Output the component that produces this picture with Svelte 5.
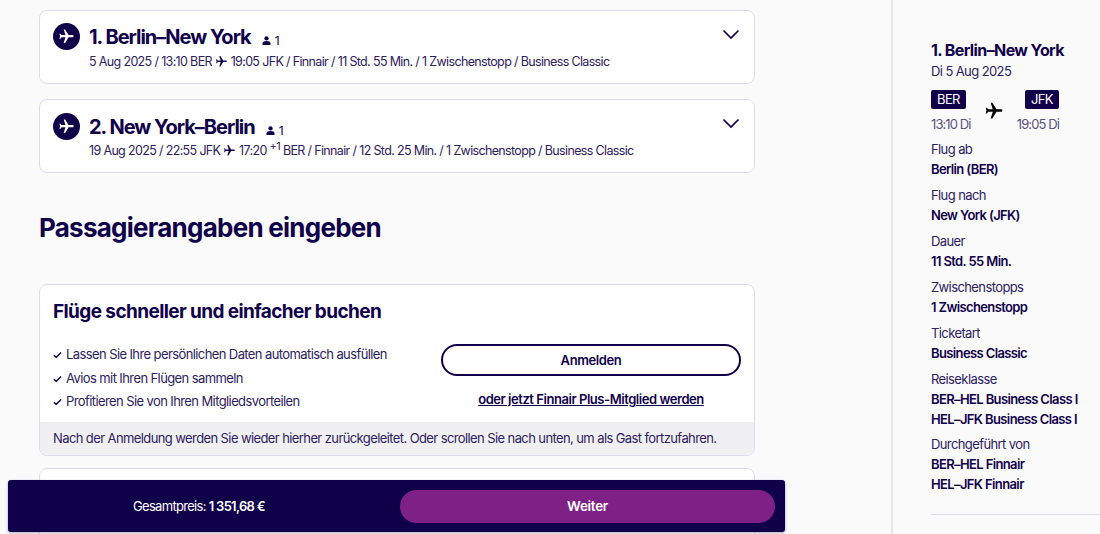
<script>
  const flights = [
    { title: '1. Berlin–New York', parts: ['5 Aug 2025 / 13:10 BER', '19:05 JFK / Finnair / 11 Std. 55 Min. / 1 Zwischenstopp / Business Classic'], plus: false },
    { title: '2. New York–Berlin', parts: ['19 Aug 2025 / 22:55 JFK', '17:20', 'BER / Finnair / 12 Std. 25 Min. / 1 Zwischenstopp / Business Classic'], plus: true }
  ];
  const benefits = ['Lassen Sie Ihre persönlichen Daten automatisch ausfüllen', 'Avios mit Ihren Flügen sammeln', 'Profitieren Sie von Ihren Mitgliedsvorteilen'];
  const details = [
    ['Flug ab', ['Berlin (BER)']],
    ['Flug nach', ['New York (JFK)']],
    ['Dauer', ['11 Std. 55 Min.']],
    ['Zwischenstopps', ['1 Zwischenstopp']],
    ['Ticketart', ['Business Classic']],
    ['Reiseklasse', ['BER–HEL Business Class I', 'HEL–JFK Business Class I']],
    ['Durchgeführt von', ['BER–HEL Finnair', 'HEL–JFK Finnair']]
  ];
  const plane = 'M21 16v-2l-8-5V3.5C13 2.67 12.33 2 11.500 2S10 2.67 10 3.500V9l-8 5v2l8-2.500V19l-2 1.500V22l3.500-1 3.500 1v-1.500L13 19v-5.500z';
</script>

<div class="page">
  <main class="main">
    {#each flights as f}
      <section class="card flight">
        <span class="badge">
          <svg viewBox="0 0 24 24" width="17" height="17"><path transform="rotate(90 12 12)" d={plane} fill="#fff" /></svg>
        </span>
        <div class="flight-text">
          <div class="flight-head">
            <h2>{f.title}</h2>
            <span class="pax">
              <svg viewBox="0 0 10 10" width="9" height="9"><circle cx="5" cy="2.700" r="2.400" /><path d="M.6 10V8c0-1.500 1.600-2.400 4.400-2.400S9.400 6.500 9.400 8v2z" /></svg>
              1
            </span>
          </div>
          <p class="meta">
            {f.parts[0]}
            <svg class="mini" viewBox="0 0 24 24" width="13" height="13"><path transform="rotate(90 12 12)" d={plane} /></svg>
            {f.parts[1]}
            {#if f.plus}<sup>+1</sup> {f.parts[2]}{/if}
          </p>
        </div>
        <svg class="chev" viewBox="0 0 18 11" width="18" height="11"><path d="M1.500 1.500 9 9l7.500-7.500" /></svg>
      </section>
    {/each}

    <h1>Passagierangaben eingeben</h1>

    <section class="card login">
      <h3>Flüge schneller und einfacher buchen</h3>
      <div class="login-body">
        <ul>
          {#each benefits as b}
            <li>
              <svg viewBox="0 0 10 8" width="9" height="8"><path d="M1 4.200 3.600 6.600 9 1.200" /></svg>
              {b}
            </li>
          {/each}
        </ul>
        <div class="actions">
          <button class="outline">Anmelden</button>
          <a href="#join">oder jetzt Finnair Plus-Mitglied werden</a>
        </div>
      </div>
      <div class="note">Nach der Anmeldung werden Sie wieder hierher zurückgeleitet. Oder scrollen Sie nach unten, um als Gast fortzufahren.</div>
    </section>

    <section class="card next"></section>
  </main>

  <aside class="side">
    <h4>1. Berlin–New York</h4>
    <div class="date">Di 5 Aug 2025</div>
    <div class="route">
      <div class="stop"><span class="code">BER</span><span class="time">13:10 Di</span></div>
      <svg viewBox="0 0 24 24" width="20" height="20"><path transform="rotate(90 12 12)" d={plane} /></svg>
      <div class="stop right"><span class="code">JFK</span><span class="time">19:05 Di</span></div>
    </div>
    <dl>
      {#each details as d}
        <dt>{d[0]}</dt>
        {#each d[1] as v}<dd>{v}</dd>{/each}
      {/each}
    </dl>
    <hr />
  </aside>

  <div class="bar">
    <div class="price">Gesamtpreis: <b>1 351,68 €</b></div>
    <button class="cta">Weiter</button>
  </div>
</div>

<style>
  :global(body) { margin: 0; background: #fafafb; }
  .page {
    height: 534px; overflow: hidden; position: relative; display: flex;
    font-family: Inter, "Open Sans", sans-serif; color: #10004a; font-size: 13px; letter-spacing: -0.6px;
  }
  .main { width: 716px; margin-left: 39px; padding-top: 10px; flex: none; }
  .card { background: #fff; border: 1px solid #dcdcec; border-radius: 8px; box-sizing: border-box; }
  .flight { height: 74px; margin-bottom: 15px; display: flex; padding: 12px 13px; position: relative; }
  .flight + .flight { padding-top: 13px; }
  .flight + .flight .meta { margin-top: 1px; }
  .badge { width: 27px; height: 27px; border-radius: 50%; background: #10004a; display: flex; align-items: center; justify-content: center; flex: none; }
  .flight-text { margin-left: 9px; }
  .flight-head { display: flex; align-items: center; height: 28px; }
  h2 { font-size: 20px; font-weight: 700; margin: 0; line-height: 28px; letter-spacing: -1px; }
  .pax { margin-left: 11px; margin-top: 6px; font-size: 12px; display: flex; align-items: center; gap: 4px; }
  .pax svg { fill: #10004a; }
  .meta { margin: 2px 0 0; line-height: 18px; color: #2d2160; white-space: nowrap; font-size: 12.5px; letter-spacing: -0.65px; }
  .mini { fill: #10004a; vertical-align: -2px; }
  sup { font-size: 11px; line-height: 0; }
  .chev { position: absolute; top: 18px; right: 14px; fill: none; stroke: #10004a; stroke-width: 1.7; }
  h1 { font-size: 26px; font-weight: 700; margin: 39px 0 40px; line-height: 32px; letter-spacing: -0.75px; }
  .login { height: 172px; padding-top: 15px; display: flex; flex-direction: column; }
  h3 { font-size: 19px; font-weight: 700; margin: 0 13px; line-height: 24px; letter-spacing: -0.6px; }
  .login-body { display: flex; justify-content: space-between; padding: 20px 13px 0; flex: 1; }
  ul { list-style: none; margin: -1px 0 0; padding: 0; }
  li { line-height: 23.500px; color: #2d2160; white-space: nowrap; }
  li svg { fill: none; stroke: #10004a; stroke-width: 1.6; margin-right: 1px; }
  .actions { width: 300px; display: flex; flex-direction: column; align-items: center; }
  .outline { width: 100%; height: 32px; border: 2px solid #10004a; border-radius: 16px; background: #fff; color: #10004a; font: 600 13px Inter, sans-serif; letter-spacing: -0.4px; }
  a { margin-top: 14px; color: #10004a; font-weight: 600; line-height: 18px; letter-spacing: -0.45px; }
  .note { height: 33px; line-height: 33px; background: #f0f0f2; border-radius: 0 0 8px 8px; padding: 0 13px; color: #2d2160; white-space: nowrap; }
  .next { height: 80px; margin-top: 12px; }
  .side { margin-left: 136px; flex: 1; border-left: 2px solid #e6e6ee; padding: 39px 0 0 38px; }
  h4 { font-size: 16px; font-weight: 700; margin: 0; line-height: 22px; white-space: nowrap; letter-spacing: -0.6px; }
  .date { line-height: 20px; margin-top: 0; color: #2d2160; }
  .route { display: flex; align-items: center; width: 128px; justify-content: space-between; margin-top: 9px; }
  .stop { display: flex; flex-direction: column; align-items: flex-start; gap: 7px; }
  .stop.right { align-items: flex-end; }
  .code { background: #10004a; color: #fff; border-radius: 2px; padding: 0 6px; line-height: 19px; }
  .time { color: #5a5080; line-height: 16px; letter-spacing: -0.9px; }
  dl { margin: 7px 0 0; }
  dt { line-height: 20px; margin-top: 6px; color: #2d2160; }
  dd + dd + dt { margin-top: 5px; }
  dd { margin: 0; line-height: 20px; font-weight: 600; white-space: nowrap; letter-spacing: -0.62px; }
  hr { border: 0; border-top: 1px solid #dcdce6; margin: 20px 0 0; }
  .bar {
    position: absolute; left: 8px; top: 480px; width: 777px; height: 52px; background: #10004a; border-radius: 3px;
    display: flex; align-items: center; box-sizing: border-box; padding: 0 10px 0 0; box-shadow: 0 1px 3px rgba(16,0,74,.35);
  }
  .price { color: #fff; width: 392px; text-align: center; box-sizing: border-box; padding-right: 10px; letter-spacing: -0.7px; }
  .price b { font-weight: 600; }
  .cta { width: 375px; height: 33px; border: 0; border-radius: 17px; background: #7f2086; color: #fff; font: 600 13.500px Inter, sans-serif; letter-spacing: -0.3px; }
</style>
